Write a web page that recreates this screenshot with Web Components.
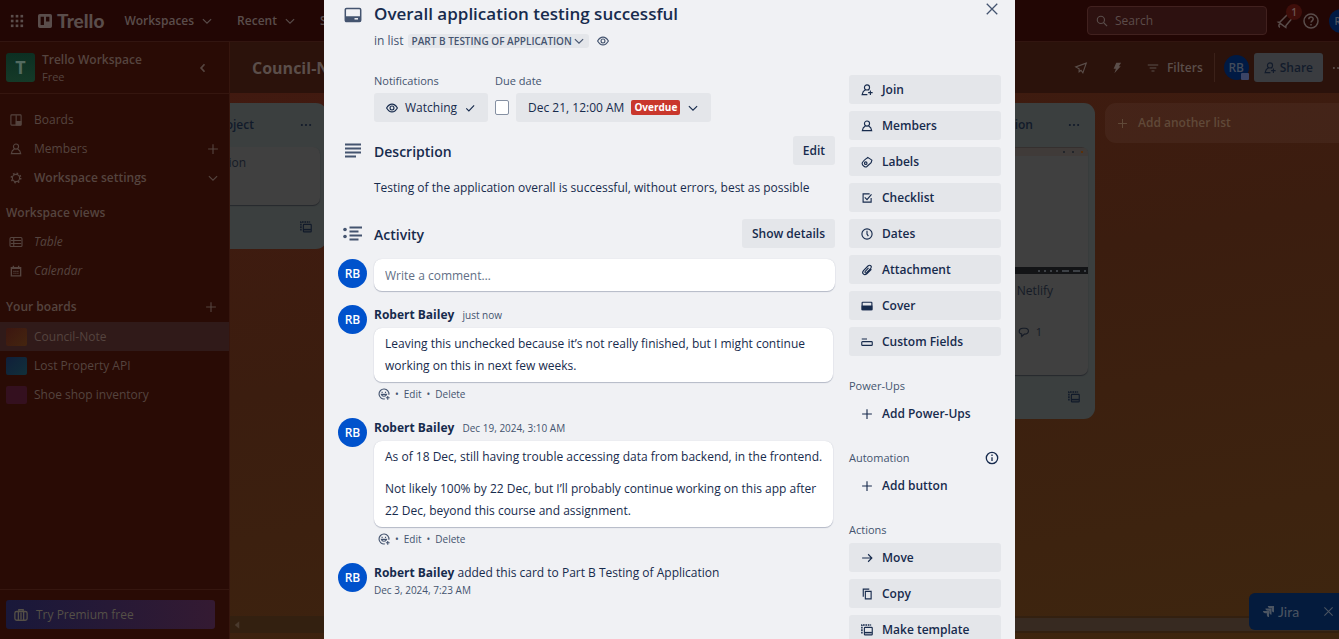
<!DOCTYPE html>
<html lang="en">
<head>
<meta charset="utf-8">
<title>Council-Note | Trello</title>
<style>
  html, body { margin: 0; height: 100%; overflow: hidden; }
  body {
    font: 12px/18px "Open Sans", "Noto Sans", sans-serif;
    color: #172b4d;
    background: #3c1a0f;
  }
</style>
</head>
<body>
<trello-app></trello-app>

<script>
const ICONS = {
  grid: '<g fill="currentColor">' + [1, 6.5, 12].map(y => [1, 6.5, 12].map(x => `<rect x="${x}" y="${y}" width="3" height="3"/>`).join('')).join('') + '</g>',
  logo: '<path fill="currentColor" fill-rule="evenodd" d="M2 0h12a2 2 0 0 1 2 2v12a2 2 0 0 1-2 2H2a2 2 0 0 1-2-2V2a2 2 0 0 1 2-2zm1 3v9.500h3.800V3zm6.200 0v5.500H13V3z"/>',
  chevron: '<path d="M2.500 5.500 8 11l5.500-5.500"/>',
  back: '<path d="M10 3 5.500 8l4.500 5" stroke-width="2.400"/>',
  boards: '<rect x="1.200" y="1.200" width="13.600" height="13.600" rx="1"/><path d="M8.200 1.500v13M9 10.500h5.500" /><path d="M8.500 10h6v4.500h-6z" fill="currentColor"/>',
  person: '<circle cx="8" cy="4.800" r="3.400"/><path d="M5.800 8 3 10.500 1.800 14.200h12.400L13 10.500 10.200 8"/>',
  join: '<circle cx="8" cy="4.600" r="3.400"/><path d="M6 7.500 3 10 1.500 14.200H8.500M10 7.500l.8.700M12.500 8.500v6M9.500 11.500h6"/>',
  gear: '<circle cx="8" cy="8" r="4.800"/><circle cx="8" cy="8" r="6.300" stroke-width="2" stroke-dasharray="2.200 2.748"/>',
  plus: '<path d="M8 1.500v13M1.500 8h13"/>',
  table: '<rect x="0" y="2" width="16" height="12" rx="1.500"/><path d="M1 6h14M1 10h14M5 2.500v11"/>',
  calendar: '<path d="M1.800 3.500h12.400v11H1.800zM2 4.500h12M4.500 1v3M11.500 1v3" stroke-width="1.800"/><path d="M4.500 8.500h7M4.500 11h7" stroke-dasharray="1.600 1"/>',
  bag: '<rect x="1" y="4" width="14" height="10" rx="2"/><path d="M5.500 4V2h5v2M5 4v10M11 4v10M8 5v8"/>',
  search: '<circle cx="6.500" cy="6.500" r="4.800"/><path d="m10 10 4.800 4.800"/>',
  bell: '<path d="M9.500 2.500 3 9l-1.500.200L8.800 14.500 9 12.500 14.500 6M3 10.500c-1.500 1.500-1.500 3 0 3.800M9.500 2.500c1-1 2-1 3-.5"/>',
  help: '<circle cx="8" cy="8" r="7"/><path d="M5.800 6.300c0-3 4.400-3 4.400-.200C10.200 7.800 8 7.900 8 9.600M8 11v1.500"/>',
  rocket: '<path d="M15 1.500 1 6.500 5.500 9 5.500 13 8 11 10.500 14.500z"/>',
  bolt: '<path d="M7 1h6.500l-3 4.500H13L4.500 15l2-6H3.500z" fill="currentColor" stroke="none"/>',
  filter: '<path d="M1 4h14M3.500 8h9M6 12h4"/>',
  dots: '<g fill="currentColor" stroke="none"><circle cx="2.500" cy="8" r="1.400"/><circle cx="8" cy="8" r="1.400"/><circle cx="13.500" cy="8" r="1.400"/></g>',
  template: '<rect x="4.500" y="4.500" width="10.500" height="10" rx="1"/><path d="M1.200 12.500V1.200h12.300" stroke-width="2" stroke-dasharray="2.200 1"/><path d="M5 11.500h9.500" stroke-width="2"/>',
  comment: '<path d="M5 10.800C0 9.800.500 3 6.500 3h3c6 0 6 7.800-1 7.800L5 14z"/>',
  card: '<path d="M2.500 1.500h13a1.200 1.200 0 0 1 1.200 1.200v10.600a1.200 1.200 0 0 1-1.200 1.200h-13a1.200 1.200 0 0 1-1.200-1.200V2.700a1.200 1.200 0 0 1 1.200-1.200z"/><path d="M1 9.200h16v4.300a1 1 0 0 1-1 1H2a1 1 0 0 1-1-1z" fill="currentColor" stroke="none"/><path d="M10.500 11.800H14" stroke="#f0f1f4" stroke-width="1.500"/>',
  eye: '<path d="M.8 8C3 4.200 5.300 2.800 8 2.800S13 4.200 15.200 8C13 11.800 10.700 13.200 8 13.200S3 11.800.8 8z"/><circle cx="8" cy="8" r="2.600"/>',
  check: '<path d="m3 8.500 3.500 3.500L13.500 4.500"/>',
  lines: '<path d="M1 1.500h16M1 5.500h16M1 9.500h16M1 13.500h11" stroke-width="2"/>',
  activity: '<g fill="currentColor" stroke="none"><circle cx="1" cy="3.500" r="1.800"/><circle cx="1" cy="10.500" r="1.800"/></g><path d="M5.500 1.500h12.500M5.500 5.500h9M5.500 9.500h12.500M5.500 13.500h9" stroke-width="2"/>',
  label: '<path d="M9 1.800 14.500 5.500 13.500 9l-6 5.300c-1.500 1.200-6-1.500-6-4.300C1.500 7.500 4 6 9 1.800z"/><circle cx="6.300" cy="9.500" r="1.700"/>',
  checklist: '<path d="M11.500 2.500H2.800v11h10.700V8M5 7.200l3 3 6-7"/>',
  clock: '<circle cx="8" cy="8" r="6.800"/><path d="M8 3.500V8l1.800 2.800"/>',
  clip: '<path d="m13.800 7-6 6c-3.500 3-7.500-.8-4.500-4.300l6-6c2.800-2.500 6 .5 3.700 3.200l-5.500 5.500c-1.500 1.400-3-.3-1.800-1.600l4.300-4.500"/>',
  cover: '<rect x="1.500" y="3" width="13" height="10" rx=".8"/><path d="M1.500 8h13v5h-13z" fill="currentColor"/>',
  fields: '<path d="M1 4h7M2 7.500h12a1 1 0 0 1 1 1v3a1 1 0 0 1-1 1H2a1 1 0 0 1-1-1v-3a1 1 0 0 1 1-1z"/>',
  info: '<circle cx="8" cy="8" r="6.500"/><path d="M8 7v4.500M8 4v1.600"/>',
  arrow: '<path d="M1.500 8h13M9.500 3l5 5-5 5"/>',
  copy: '<path d="M5.800 4.500h7.700v10H5.800zM3 11.500v-10h8"/>',
  close: '<path d="m2 2 12 12M14 2 2 14"/>',
  smile: '<path d="M14.500 9A6.600 6.600 0 1 0 9 14.500M4.500 8.500c.8 3.300 6 3.300 7 0zM5.500 5v1.500M10 5v1.500M13 10.500v5M10.500 13h5"/>',
  jira: '<g fill="currentColor" stroke="none"><path d="M7 0h9v9c-2 0-3.200-1.500-3.200-3V3.200H10C8.500 3.200 7 2 7 0z"/><path d="M3.500 3.600h8.900v9c-2 0-3.200-1.500-3.200-3V6.800H6.500c-1.500 0-3-1.200-3-3.200z"/><path d="M0 7.200h8.800v8.800c-2 0-3.200-1.400-3.200-3v-2.600H3c-1.500 0-3-1.200-3-3.200z"/></g>',
  tri: '<path d="M11 3v10L5 8z" fill="currentColor" stroke="none"/>'
};
const WIDE = new Set(['card', 'lines', 'activity']);

function define(name, css, html, setup) {
  const template = document.createElement('template');
  template.innerHTML = `<style>*{box-sizing:border-box}${css}</style>${html}`;
  customElements.define(name, class extends HTMLElement {
    constructor() {
      super();
      this.attachShadow({ mode: 'open' }).append(template.content.cloneNode(true));
    }
    connectedCallback() { if (setup) setup(this, this.shadowRoot); }
  });
}

define('t-icon', `
  :host { display: inline-flex; flex: none; width: var(--size, 14px); height: var(--size, 14px); }
  svg { width: 100%; height: 100%; overflow: visible; fill: none; stroke: currentColor; stroke-width: 1.500; }
`, '<svg aria-hidden="true"></svg>', (el, root) => {
  const name = el.getAttribute('name');
  const svg = root.querySelector('svg');
  svg.setAttribute('viewBox', WIDE.has(name) ? '0 -1 18 18' : '0 0 16 16');
  if (name === 'grid' || name === 'logo') svg.style.stroke = 'none';
  svg.innerHTML = ICONS[name];
});

define('t-avatar', `
  :host { display: flex; flex: none; align-items: center; justify-content: center;
    width: var(--avatar, 29px); height: var(--avatar, 29px); border-radius: 50%;
    background: var(--avatar-bg, #0052cc); color: var(--avatar-fg, #fff); font-weight: 600; font-size: 12px; }
`, '<slot></slot>');

/* ---------- top bar ---------- */
define('t-topbar', `
  :host { display: flex; align-items: center; height: 42px; padding-left: 10px; background: #220604;
    border-bottom: 1px solid #321510; color: #5a4d4b; font-weight: 600; overflow: hidden; }
  nav { display: flex; align-items: center; flex: 1; min-width: 0; overflow: hidden; }
  button { all: unset; display: flex; align-items: center; gap: 7px; white-space: nowrap; }
  nav button { margin-right: 24px; }
  nav button.apps { margin-right: 14px; }
  .logo { display: flex; align-items: center; gap: 5px; margin-right: 20px; color: inherit; text-decoration: none;
    font: 900 19px/24px Lato, sans-serif; }
  .right { display: flex; align-items: center; gap: 8px; margin-right: -14px; }
  label { display: flex; align-items: center; gap: 7px; width: 180px; height: 29px; padding: 0 8px;
    border: 1px solid #41211f; border-radius: 4px; background: #2d1110; }
  input { all: unset; flex: 1; min-width: 0; font-weight: 400; }
  input::placeholder { color: #5c4c4a; opacity: 1; }
  .bell { position: relative; padding: 2px; }
  .count { position: absolute; top: -7px; right: -7px; width: 16px; height: 16px; border-radius: 8px;
    background: #3f0e0a; color: #6b5552; font-size: 10px; line-height: 16px; text-align: center; }
  t-avatar { --avatar: 24px; --avatar-bg: #001a44; --avatar-fg: #4c5360; margin-left: 2px; font-size: 10px; }
`, `
  <nav>
    <button class="apps" aria-label="More apps"><t-icon name="grid"></t-icon></button>
    <a class="logo" href="#"><t-icon name="logo"></t-icon>Trello</a>
    <button>Workspaces <t-icon name="chevron" style="--size:12px"></t-icon></button>
    <button>Recent <t-icon name="chevron" style="--size:12px"></t-icon></button>
    <button>Starred</button>
  </nav>
  <div class="right">
    <label><t-icon name="search" style="--size:12px"></t-icon><input type="search" placeholder="Search" aria-label="Search"></label>
    <button class="bell" aria-label="Notifications"><t-icon name="bell" style="--size:16px"></t-icon><span class="count">1</span></button>
    <button aria-label="Help"><t-icon name="help" style="--size:16px"></t-icon></button>
    <t-avatar>RB</t-avatar>
  </div>
`);

/* ---------- sidebar ---------- */
define('t-side-link', `
  :host { display: block; }
  a { display: flex; align-items: center; gap: 8px; height: 29px; padding: 0 10px 0 9px; color: inherit; text-decoration: none; }
  :host([active]) a { background: #301a19; }
  :host([bold]) { font-weight: 600; }
  :host([italic]) { font-style: italic; }
  :host([board]) a { padding-left: 6px; gap: 7px; }
  i { width: 21px; height: 18px; border-radius: 2px; background: var(--swatch); }
  span { flex: 1; }
`, '<a href="#"><span><slot></slot></span></a>', (el, root) => {
  const a = root.querySelector('a');
  if (a.children.length > 1) return;
  if (el.hasAttribute('board')) a.prepend(document.createElement('i'));
  for (const [attr, method] of [['icon', 'prepend'], ['end', 'append']]) {
    if (!el.hasAttribute(attr)) continue;
    const icon = document.createElement('t-icon');
    icon.setAttribute('name', el.getAttribute(attr));
    if (attr === 'icon') icon.style.cssText = '--size:12px;margin:0 4px 0 1px';
    else icon.style.setProperty('--size', '12px');
    a[method](icon);
  }
});

define('t-sidebar', `
  :host { display: flex; flex-direction: column; flex: none; width: 230px; border-right: 1px solid #36160e;
    background: #290b05; color: #55443f; }
  header { display: flex; align-items: center; gap: 7px; height: 52px; padding: 0 20px 0 6px; border-bottom: 1px solid #35160f; }
  .mark { width: 29px; height: 29px; border-radius: 3px; background: linear-gradient(#0c2f22, #153a28); color: #536b60;
    font-size: 18px; font-weight: 700; line-height: 29px; text-align: center; }
  .name { flex: 1; line-height: 17px; }
  .name b { display: block; font-weight: 600; }
  .name small { font-size: 11px; }
  button { all: unset; display: flex; align-items: center; }
  nav { flex: 1; padding-top: 11px; }
  h2 { display: flex; justify-content: space-between; align-items: center; margin: 6px 0 0; padding: 0 12px 0 6px;
    height: 29px; font-size: 12px; font-weight: 600; }
  h2.boards { margin: 7px 0 1px; }
  footer { border-top: 1px solid #35160f; padding: 10px 14px 10px 6px; height: 50px; }
  footer button { box-sizing: border-box; width: 100%; height: 29px; gap: 8px; padding: 0 8px; border-radius: 3px;
    background: linear-gradient(90deg, #19183a, #341a32); color: #555047; }
`, `
  <header><div class="mark">T</div><div class="name"><b>Trello Workspace</b><small>Free</small></div>
    <button aria-label="Collapse sidebar"><t-icon name="back" style="--size:12px"></t-icon></button></header>
  <nav>
    <t-side-link icon="boards">Boards</t-side-link>
    <t-side-link icon="person" end="plus">Members</t-side-link>
    <t-side-link icon="gear" end="chevron" bold>Workspace settings</t-side-link>
    <h2>Workspace views</h2>
    <t-side-link icon="table" italic>Table</t-side-link>
    <t-side-link icon="calendar" italic>Calendar</t-side-link>
    <h2 class="boards">Your boards <button aria-label="Create board"><t-icon name="plus" style="--size:12px"></t-icon></button></h2>
    <t-side-link board active style="--swatch:linear-gradient(135deg,#3c1610,#44250f)">Council-Note</t-side-link>
    <t-side-link board style="--swatch:linear-gradient(135deg,#101f3a,#11303a)">Lost Property API</t-side-link>
    <t-side-link board style="--swatch:#34101f">Shoe shop inventory</t-side-link>
  </nav>
  <footer><button><t-icon name="bag"></t-icon>Try Premium free</button></footer>
`);

/* ---------- board ---------- */
define('t-list', `
  :host { display: flex; flex-direction: column; flex: none; width: 246px; border-radius: 11px; background: #3b3f3f; color: #111a2a; }
  header, footer { display: flex; align-items: center; justify-content: space-between; padding: 0 15px 0 11px; height: 44px; }
  footer { justify-content: flex-end; }
  h2 { margin: 0; width: var(--title, 162px); font-size: 12px; font-weight: 600; line-height: 18px; text-align: right; }
  .cards { padding: 0 7px; }
`, `
  <header><h2><slot name="title"></slot></h2><t-icon name="dots" style="--size:12px"></t-icon></header>
  <div class="cards"><slot></slot></div>
  <footer><t-icon name="template" style="--size:12px"></t-icon></footer>
`);

define('t-tile', `
  :host { display: block; border-radius: 7px; background: #404040; box-shadow: 0 1px 1px #26282d; color: #151b26; overflow: hidden; }
`, '<slot></slot>');

define('t-board', `
  :host { display: flex; flex-direction: column; flex: 1; min-width: 0; overflow: hidden;
    background: linear-gradient(170deg, #421910, #3b1d0f 45%, #3e260f); }
  .bar { display: flex; align-items: center; height: 51px; padding-left: 22px; background: #2b120b; color: #5b4e4a; font-weight: 600; }
  h1 { flex: 1; margin: 0; font-size: 16px; font-weight: 700; white-space: nowrap; }
  button { all: unset; display: flex; align-items: center; gap: 8px; }
  .tools { display: flex; align-items: center; gap: 24px; margin-right: -5px; flex: none; }
  .people { display: flex; align-items: center; gap: 5px; padding-left: 9px; border-left: 1px solid #3b2119; margin-left: -13px; }
  .people .share { height: 29px; padding: 0 10px; gap: 4px; border-radius: 3px; background: #3a3c40; color: #121b2b; box-sizing: border-box; }
  .people .more { margin-left: 4px; }
  .me { position: relative; }
  .badge { position: absolute; right: 0; bottom: 0; width: 8px; height: 7px; background: #3b4466; border-radius: 1px; }
  .lists { display: flex; align-items: flex-start; gap: 10px; flex: 1; margin-left: -149px; padding-top: 10px; width: max-content; }
  .add { width: 246px; height: 40px; padding: 0 12px; gap: 10px; border-radius: 11px; background: rgba(255,255,255,.04); color: #604938; font-weight: 600; box-sizing: border-box; }
  .text { height: 58px; padding: 7px 74px 0 0; text-align: right; }
  .shot { height: 127px; border-top: 1px solid #35302f; background: #404040; display: flex; flex-direction: column; justify-content: space-between; }
  .shot div { display: flex; justify-content: flex-end; align-items: center; gap: 7px; height: 8px; padding-right: 5px; background: #403b39; }
  .shot div + div { height: 7px; background: #131416; gap: 4px; padding-right: 2px; }
  .shot i { width: 2px; height: 2px; background: #22252a; }
  .shot i.o { background: #5a3009; }
  .shot div + div i { background: #3d4146; }
  .shot div + div i.w { width: 7px; }
  .body { height: 101px; padding: 8px 35px 0 0; text-align: right; }
  .body p { margin: 0 0 23px; }
  .body .n { display: flex; justify-content: flex-end; gap: 6px; align-items: center; margin-right: 11px; font-size: 11px; }
  .scroll { display: flex; align-items: center; height: 17px; margin-bottom: 6px; padding-left: 1px; background: #332010; color: #4a3a2d; }
  .scroll i { width: 55%; height: 13px; border-radius: 2px; margin-left: auto; background: #372a21; }
`, `
  <div class="bar"><h1>Council-Note</h1>
    <div class="tools">
      <button aria-label="Power-Ups"><t-icon name="rocket" style="--size:12px"></t-icon></button>
      <button aria-label="Automation"><t-icon name="bolt" style="--size:12px"></t-icon></button>
      <button><t-icon name="filter" style="--size:12px"></t-icon>Filters</button>
      <div class="people">
        <div class="me"><t-avatar style="--avatar:25px;--avatar-bg:#001a44;--avatar-fg:#434b5a">RB</t-avatar><span class="badge"></span></div>
        <button class="share"><t-icon name="join" style="--size:12px"></t-icon>Share</button>
        <button class="more" aria-label="Menu"><t-icon name="dots" style="--size:12px"></t-icon></button>
      </div>
    </div>
  </div>
  <div class="lists">
    <t-list><span slot="title">Project</span><t-tile><div class="text">ion</div></t-tile></t-list>
    <t-list></t-list>
    <t-list></t-list>
    <t-list style="--title:173px"><span slot="title">Application</span>
      <t-tile>
        <div class="shot"><div><i></i><i></i><i class="o"></i></div><div><i></i><i></i><i></i><i></i><i class="w"></i><i class="w"></i><i></i></div></div>
        <div class="body"><p>Netlify</p><div class="n"><t-icon name="comment" style="--size:12px"></t-icon>1</div></div>
      </t-tile>
    </t-list>
    <button class="add"><t-icon name="plus" style="--size:11px"></t-icon>Add another list</button>
  </div>
  <div class="scroll"><t-icon name="tri" style="--size:12px"></t-icon><i></i></div>
`);

/* ---------- card dialog ---------- */
define('t-action', `
  :host { display: block; }
  button { all: unset; box-sizing: border-box; display: flex; align-items: center; gap: 8px; width: 100%; height: 29px;
    padding: 0 11px; border-radius: 3px; background: #e4e6ea; color: #172b4d; font-weight: 600; cursor: pointer; }
  :host([plain]) button { background: none; }
  t-icon { --size: 12px; margin: 0 1px; }
`, '<button><span><slot></slot></span></button>', (el, root) => {
  const button = root.querySelector('button');
  if (button.children.length > 1) return;
  const icon = document.createElement('t-icon');
  icon.setAttribute('name', el.getAttribute('icon'));
  button.prepend(icon);
});

define('t-row', `
  :host { display: grid; grid-template-columns: 29px minmax(0, 1fr); column-gap: 7px; }
  .lead { display: flex; align-items: flex-start; justify-content: center; }
`, '<div class="lead"><slot name="lead"></slot></div><div><slot></slot></div>');

define('t-comment', `
  :host { display: block; padding-right: 2px; }
  .who { line-height: 20px; height: 23px; }
  b { font-weight: 700; color: #172b4d; }
  a { color: inherit; text-decoration: none; }
  .when { margin-left: 5px; font-size: 10px; color: #44546f; }
  .box { padding: 5px 4px 5px 11px; border-radius: 8px; background: #fff; box-shadow: 0 1px 1px #b4b9c6, 0 0 1px #c5c9d3; line-height: 22px; }
  .foot { display: flex; align-items: center; gap: 5px; height: 24px; padding-left: 4px; font-size: 10px; color: #44546f; }
  t-icon { --size: 12px; }
`, `
  <div class="who"><b><slot name="name"></slot></b> <a class="when" href="#"><slot name="when"></slot></a></div>
  <div class="box"><slot></slot></div>
  <div class="foot"><t-icon name="smile"></t-icon><span>•</span><a href="#">Edit</a><span>•</span><a href="#">Delete</a></div>
`);

define('t-dialog', `
  :host { display: block; width: 691px; max-width: 100%; min-height: 100%; padding: 0 14px; background: #f0f1f4; }
  button { font: inherit; color: inherit; border: 0; padding: 0; background: none; }
  .top { display: flex; justify-content: space-between; align-items: flex-start; }
  h1 { margin: 0; font-size: 17px; line-height: 28px; font-weight: 600; white-space: nowrap; }
  .close { display: flex; padding: 2px; color: #44546f; }
  .sub { display: flex; align-items: center; gap: 4px; height: 26px; color: #44546f; }
  .sub button { display: flex; align-items: center; gap: 1px; height: 14px; padding: 0 4px; border-radius: 3px; background: #e4e6ea;
    font-size: 10px; line-height: 14px; font-weight: 600; }
  .sub t-icon.eye { margin-left: 4px; }
  .cols { display: grid; grid-template-columns: minmax(0, 1fr) 152px; column-gap: 14px; padding-top: 18px; }
  .meta { display: flex; gap: 7px; }
  .meta h3, aside h3 { margin: 0; font-size: 11px; line-height: 18px; font-weight: 400; color: #44546f; }
  .meta .line { display: flex; align-items: center; gap: 7px; height: 29px; margin-top: 3px; }
  .btn { display: flex; align-items: center; height: 29px; padding: 0 10px; border-radius: 3px; background: #e4e6ea; font-weight: 600; white-space: nowrap; }
  .meta .btn { gap: 7px; font-weight: 500; padding: 0 12px; }
  input[type=checkbox] { appearance: none; width: 14px; height: 15px; margin: 0; border: 1px solid #8590a2; border-radius: 2px; background: #fff; }
  .over { padding: 0 3px; border-radius: 2px; background: #c9372c; color: #fff; font-size: 10px; line-height: 15px; font-weight: 700; }
  .head { display: flex; align-items: center; justify-content: space-between; height: 29px; }
  h2 { margin: 0; padding-top: 2px; font-size: 14px; font-weight: 600; }
  p { margin: 0; }
  .desc { padding-top: 14px; height: 54px; }
  t-icon.big { --size: 18px; margin-top: 6px; color: #44546f; }
  .field { display: block; width: 100%; height: 32px; border: 0; border-radius: 8px; padding: 0 11px; background: #fff;
    box-shadow: 0 1px 1px #b4b9c6, 0 0 1px #c5c9d3; font: inherit; }
  .field::placeholder { color: #626f86; opacity: 1; }
  .write { margin: 11px 0 14px; }
  t-comment { padding-bottom: 12px; }
  t-comment p + p { margin-top: 10px; }
  t-row.note { line-height: 20px; }
  .note a { display: block; font-size: 10px; line-height: 14px; color: #44546f; text-decoration: none; }
  aside { display: flex; flex-direction: column; gap: 7px; padding-top: 3px; }
  aside h3 { display: flex; justify-content: space-between; align-items: center; height: 18px; margin: 14px 0 -3px; padding-right: 2px; }
  aside h3 t-icon { color: #172b4d; }
`, `
  <t-row>
    <t-icon class="big" slot="lead" name="card"></t-icon>
    <div class="top"><h1>Overall application testing successful</h1>
      <button class="close" aria-label="Close dialog"><t-icon name="close"></t-icon></button></div>
    <div class="sub">in list <button>PART B TESTING OF APPLICATION<t-icon name="chevron" style="--size:12px"></t-icon></button><t-icon class="eye" name="eye" style="--size:12px"></t-icon></div>
  </t-row>
  <div class="cols">
    <main>
      <t-row>
        <div class="meta">
          <div><h3>Notifications</h3><div class="line"><button class="btn"><t-icon name="eye" style="--size:12px"></t-icon>Watching<t-icon name="check" style="--size:12px"></t-icon></button></div></div>
          <div><h3>Due date</h3><div class="line"><input type="checkbox" aria-label="Mark due date complete"><button class="btn">Dec 21, 12:00 AM <span class="over">Overdue</span><t-icon name="chevron" style="--size:12px"></t-icon></button></div></div>
        </div>
      </t-row>
      <t-row style="margin-top:14px">
        <t-icon class="big" slot="lead" name="lines"></t-icon>
        <div class="head"><h2>Description</h2><button class="btn">Edit</button></div>
        <p class="desc">Testing of the application overall is successful, without errors, best as possible</p>
      </t-row>
      <t-row>
        <t-icon class="big" slot="lead" name="activity"></t-icon>
        <div class="head"><h2>Activity</h2><button class="btn">Show details</button></div>
      </t-row>
      <t-row class="write"><t-avatar slot="lead">RB</t-avatar><input class="field" placeholder="Write a comment…" aria-label="Write a comment"></t-row>
      <t-row><t-avatar slot="lead">RB</t-avatar>
        <t-comment><span slot="name">Robert Bailey</span><span slot="when">just now</span>
          <p>Leaving this unchecked because it’s not really finished, but I might continue working on this in next few weeks.</p></t-comment></t-row>
      <t-row><t-avatar slot="lead">RB</t-avatar>
        <t-comment><span slot="name">Robert Bailey</span><span slot="when">Dec 19, 2024, 3:10 AM</span>
          <p>As of 18 Dec, still having trouble accessing data from backend, in the frontend.</p>
          <p>Not likely 100% by 22 Dec, but I’ll probably continue working on this app after 22 Dec, beyond this course and assignment.</p></t-comment></t-row>
      <t-row class="note"><t-avatar slot="lead">RB</t-avatar>
        <div><b>Robert Bailey</b> added this card to Part B Testing of Application</div><a href="#">Dec 3, 2024, 7:23 AM</a></t-row>
    </main>
    <aside>
      <t-action icon="join">Join</t-action>
      <t-action icon="person">Members</t-action>
      <t-action icon="label">Labels</t-action>
      <t-action icon="checklist">Checklist</t-action>
      <t-action icon="clock">Dates</t-action>
      <t-action icon="clip">Attachment</t-action>
      <t-action icon="cover">Cover</t-action>
      <t-action icon="fields">Custom Fields</t-action>
      <h3>Power-Ups</h3>
      <t-action plain icon="plus">Add Power-Ups</t-action>
      <h3>Automation <t-icon name="info"></t-icon></h3>
      <t-action plain icon="plus">Add button</t-action>
      <h3>Actions</h3>
      <t-action icon="arrow">Move</t-action>
      <t-action icon="copy">Copy</t-action>
      <t-action icon="template">Make template</t-action>
    </aside>
  </div>
`);

define('t-jira', `
  :host { position: fixed; right: 0; bottom: 9px; display: flex; align-items: center; gap: 4px; width: 90px; height: 37px;
    padding: 0 5px 0 14px; border-radius: 6px 0 0 6px; background: #041b3d; color: #4c5562; font: 14px/20px Lato, sans-serif; }
  span { flex: 1; }
  button { all: unset; display: flex; }
`, '<t-icon name="jira" style="--size:11px"></t-icon><span>Jira</span><button aria-label="Dismiss"><t-icon name="close" style="--size:11px"></t-icon></button>');

define('trello-app', `
  :host { display: flex; flex-direction: column; height: 100%; }
  .body { display: flex; flex: 1; min-height: 0; }
  .overlay { position: fixed; inset: 0; display: flex; justify-content: center; overflow: hidden; }
`, `
  <t-topbar></t-topbar>
  <div class="body"><t-sidebar></t-sidebar><t-board></t-board></div>
  <t-jira></t-jira>
  <div class="overlay"><t-dialog role="dialog" aria-label="Overall application testing successful"></t-dialog></div>
`);
</script>
</body>
</html>
